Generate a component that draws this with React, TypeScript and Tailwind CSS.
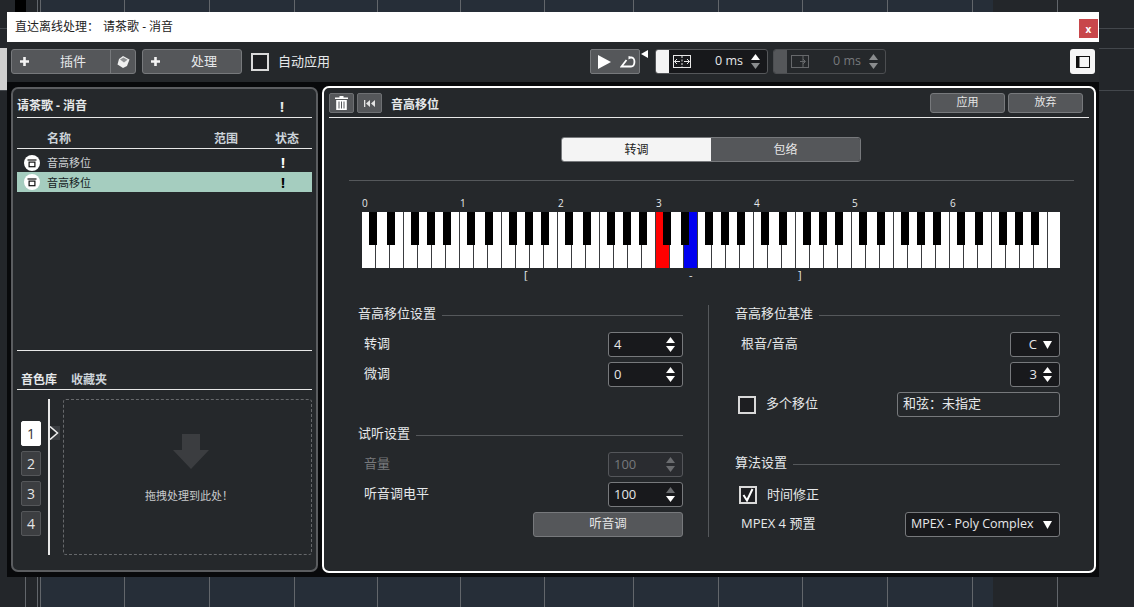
/**
 * 直达离线处理窗口：插件链、音色库与音高移位设置面板。
 */

const gridCells = [
  { w: 26, cls: 'border-r border-[#62666b]' },
  { w: 12, cls: 'border-r border-[#62666b]' },
  { w: 3, cls: 'border-r border-[#62666b]' },
  { w: 84, cls: 'border-r border-[#62666b] bg-[#262e38]' },
  { w: 85, cls: 'border-r border-[#62666b] bg-[#262e38]' },
  { w: 85, cls: 'border-r border-[#62666b] bg-[#262e38]' },
  { w: 83, cls: 'border-r border-[#62666b] bg-[#262e38]' },
  { w: 83, cls: 'border-r border-[#62666b] bg-[#262e38]' },
  { w: 84, cls: 'border-r border-[#62666b] bg-[#262e38]' },
  { w: 89, cls: 'border-r border-[#62666b] bg-[#262e38]' },
  { w: 85, cls: 'border-r border-[#62666b] bg-[#262e38]' },
  { w: 84, cls: 'border-r border-[#62666b] bg-[#262e38]' },
  { w: 85, cls: 'border-r border-[#62666b] bg-[#262e38]' },
  { w: 85, cls: 'border-r border-[#62666b] bg-[#262e38]' },
  { w: 20, cls: 'bg-[#262e38]' },
  { w: 65, cls: 'border-r border-[#62666b]' },
]

const blackOffsets = [7, 25, 49, 65, 81]

function Piano() {
  const whites = Array.from({ length: 49 }, (_, i) => i + 1)
  const blacks: number[] = []
  for (let o = 0; o < 7; o++) blackOffsets.forEach((b) => blacks.push(o * 98 + b))
  return (
    <svg width="698" height="56" viewBox="0 0 698 56" className="block" shapeRendering="crispEdges">
      <rect width="698" height="56" fill="#fff" />
      <rect x="294" width="14" height="56" fill="#ff0000" />
      <rect x="322" width="14" height="56" fill="#0000f0" />
      {whites.map((i) => (
        <rect key={i} x={i * 14 - 1} width="1" height="56" fill="#3a3c40" />
      ))}
      {blacks.map((x) => (
        <rect key={x} x={x} width="8" height="33" fill="#000" />
      ))}
    </svg>
  )
}

function Arrows({ up = '#fff', down = '#fff' }: { up?: string; down?: string }) {
  return (
    <svg width="9" height="15" viewBox="0 0 9 15" className="shrink-0">
      <path d="M4.5 0 L9 6 L0 6 Z" fill={up} />
      <path d="M4.5 15 L9 9 L0 9 Z" fill={down} />
    </svg>
  )
}

function Caret() {
  return (
    <svg width="9" height="8" viewBox="0 0 9 8" className="shrink-0">
      <path d="M0 0 H9 L4.5 8 Z" fill="#fff" />
    </svg>
  )
}

function Spin({
  value,
  disabled,
  dimUp,
}: {
  value: string
  disabled?: boolean
  dimUp?: boolean
}) {
  return (
    <div
      className={`flex h-[25px] w-[75px] items-center justify-between rounded-[3px] border pl-[5px] pr-[7px] text-[13px] ${
        disabled
          ? 'border-[#54565a] bg-[#2a2c30] text-[#77797c]'
          : 'border-[#77797c] bg-[#18191c] text-[#e6e6e6]'
      }`}
    >
      <span>{value}</span>
      {disabled ? (
        <Arrows up="#6a6c6f" down="#6a6c6f" />
      ) : (
        <Arrows up={dimUp ? '#6a6c6f' : '#fff'} />
      )}
    </div>
  )
}

function Heading({ children }: { children: string }) {
  return (
    <div className="flex h-[20px] items-center gap-[6px] text-[13px] text-[#e6e8ea]">
      <span className="-ml-px shrink-0 pb-[2px]">{children}</span>
      <div className="h-px flex-1 bg-[#55585b]" />
    </div>
  )
}

function Checkbox({ checked }: { checked?: boolean }) {
  return (
    <div className="flex h-[18px] w-[18px] shrink-0 items-center justify-center border-2 border-[#d9d9d9] bg-[#1d1e21]">
      {checked && (
        <svg width="14" height="14" viewBox="0 0 14 14">
          <path d="M2.5 7 L6 12.5 L11.5 1" fill="none" stroke="#fff" strokeWidth="2" />
        </svg>
      )}
    </div>
  )
}

function PlusIcon() {
  return (
    <svg width="9" height="9" viewBox="0 0 9 9">
      <path d="M3.2 0 H5.8 V3.2 H9 V5.8 H5.8 V9 H3.2 V5.8 H0 V3.2 H3.2 Z" fill="#f4f4f4" />
    </svg>
  )
}

function RowIcon() {
  return (
    <svg width="16" height="16" viewBox="0 0 16 16" className="shrink-0">
      <circle cx="8" cy="8" r="8" fill="#fff" />
      <path d="M3.5 5 H12.5" stroke="#111" strokeWidth="1.2" />
      <rect x="5.1" y="7.1" width="5.8" height="4.6" fill="none" stroke="#111" strokeWidth="1.2" />
    </svg>
  )
}

function Slot({ n, active }: { n: string; active?: boolean }) {
  return (
    <div
      className={`flex h-[25px] w-[20px] items-center justify-center rounded-[2px] border text-[14px] ${
        active
          ? 'border-white bg-white text-[#333]'
          : 'border-[#55575a] bg-[#3c3e41] text-[#e6e6e6]'
      }`}
    >
      {n}
    </div>
  )
}

function PluginColumn() {
  return (
    <div className="flex h-[485px] w-[307px] shrink-0 flex-col rounded-[7px] border-2 border-[#5b5d60] bg-[#25282b] px-[4px] pb-[15px] text-[#e6e8ea]">
      <div className="flex h-[29px] shrink-0 items-center justify-between border-b border-[#e8e8e8] pt-[6px]">
        <span className="text-[12px] font-bold">请茶歌 - 消音</span>
        <span className="mr-[28px] text-[14px] font-bold">!</span>
      </div>
      <div className="flex h-[31px] shrink-0 items-end border-b border-[#e8e8e8] text-[12px] font-bold text-[#ccd3d9]">
        <span className="ml-[30px] w-[167px]">名称</span>
        <span className="w-[61px]">范围</span>
        <span>状态</span>
      </div>
      <div className="flex h-[23px] shrink-0 items-center text-[11px] text-[#cfd3d6]">
        <div className="ml-[7px] mr-[7px] pt-[5px]"><RowIcon /></div>
        <span className="w-[234px] pt-[5px]">音高移位</span>
        <span className="pt-[4px] text-[14px] font-bold text-white">!</span>
      </div>
      <div className="flex h-[20px] shrink-0 items-center bg-[#a5cdbf] text-[11px] text-[#14201c]">
        <div className="ml-[7px] mr-[7px]"><RowIcon /></div>
        <span className="w-[234px] pt-[2px]">音高移位</span>
        <span className="text-[14px] font-bold text-black">!</span>
      </div>
      <div className="flex-1 border-b border-[#e8e8e8]" />
      <div className="flex h-[39px] shrink-0 items-end gap-[14px] border-b border-[#e8e8e8] pl-[4px] text-[12px] font-bold">
        <span>音色库</span>
        <span className="text-[#ccd3d9]">收藏夹</span>
      </div>
      <div className="mt-[9px] flex h-[156px] shrink-0">
        <div className="flex w-[31px] flex-col gap-[5px] pl-[4px] pt-[22px]">
          <Slot n="1" active />
          <Slot n="2" />
          <Slot n="3" />
          <Slot n="4" />
        </div>
        <div className="w-[15px] border-l-2 border-[#e8e8e8] pt-[27px]">
          <svg width="10" height="14" viewBox="0 0 10 14" className="block">
            <rect width="10" height="14" fill="#3a3d41" />
            <path d="M0 0.5 L7.5 7 L0 13.5" fill="#25282b" stroke="#f0f0f0" strokeWidth="1.5" />
          </svg>
        </div>
        <div className="flex w-[249px] flex-col items-center rounded-[3px] border border-dashed border-[#66686b] pt-[34px]">
          <svg width="36" height="35" viewBox="0 0 36 35" className="ml-[6px] block">
            <path d="M9 0 H27 V16 H36 L18 35 L0 16 H9 Z" fill="#3b3d40" />
          </svg>
          <span className="ml-[3px] mt-[19px] text-[11px] text-[#c8cacc]">拖拽处理到此处！</span>
        </div>
      </div>
    </div>
  )
}

function SettingsPanel() {
  return (
    <div className="flex h-[487px] w-[774px] shrink-0 flex-col rounded-[7px] border-2 border-white bg-[#25282b] text-[#e6e8ea]">
      <div className="mx-[5px] flex h-[30px] shrink-0 items-center border-b border-[#e8e8e8]">
        <button className="mt-[1px] flex h-[20px] w-[25px] items-center justify-center rounded-[2px] border border-[#6e7073] bg-[#55575a]">
          <svg width="13" height="14" viewBox="0 0 13 14">
            <path d="M4.5 0 H8.5 V1.5 H13 V3 H0 V1.5 H4.5 Z M1.2 4 H11.8 V14 H1.2 Z" fill="#fff" />
            <path d="M4 5.5 V12.5 M6.5 5.5 V12.5 M9 5.5 V12.5" stroke="#55575a" strokeWidth="1" />
          </svg>
        </button>
        <button className="ml-[3px] mt-[1px] flex h-[20px] w-[25px] items-center justify-center rounded-[2px] border border-[#6e7073] bg-[#55575a]">
          <svg width="11" height="7" viewBox="0 0 11 7">
            <path d="M0 0 H1.3 V7 H0 Z M6 0 V7 L2 3.5 Z M11 0 V7 L7 3.5 Z" fill="#e4e4e4" />
          </svg>
        </button>
        <span className="ml-[9px] pt-[5px] text-[12px] font-bold">音高移位</span>
        <button className="ml-auto h-[20px] w-[75px] rounded-[3px] border border-[#77797c] bg-[#55575a] text-[11px] text-[#e6e6e6]">
          应用
        </button>
        <button className="ml-[3px] mr-[6px] h-[20px] w-[75px] rounded-[3px] border border-[#77797c] bg-[#55575a] text-[11px] text-[#e6e6e6]">
          放弃
        </button>
      </div>

      <div className="ml-[237px] mt-[19px] flex h-[25px] w-[300px] shrink-0 overflow-hidden rounded-[3px] border border-[#77797c] text-[12px]">
        <div className="flex w-[149px] items-center justify-center bg-[#f4f4f4] text-[#222]">转调</div>
        <div className="flex flex-1 items-center justify-center bg-[#55575a] text-[#e6e6e6]">包络</div>
      </div>

      <div className="ml-[25px] mt-[18px] h-px w-[725px] shrink-0 bg-[#55585b]" />

      <div className="ml-[38px] mt-[14px] flex h-[17px] shrink-0 items-center text-[10px] text-[#e6e8ea]">
        {['0', '1', '2', '3', '4', '5', '6'].map((n) => (
          <span key={n} className="w-[98px]">{n}</span>
        ))}
      </div>
      <div className="ml-[38px] shrink-0">
        <Piano />
      </div>
      <div className="ml-[38px] flex h-[14px] shrink-0 items-center pl-[162px] text-[11px] text-[#e6e8ea]">
        <span className="w-[165px]">[</span>
        <span className="w-[109px]">-</span>
        <span>]</span>
      </div>

      <div className="ml-[35px] mt-[23px] flex">
        <div className="flex w-[324px] flex-col">
          <Heading>音高移位设置</Heading>
          <div className="mt-[7px] flex flex-col gap-[5px] text-[13px]">
            <div className="flex items-center justify-between pl-[5px]">
              <span className="pb-[2px]">转调</span>
              <Spin value="4" />
            </div>
            <div className="flex items-center justify-between pl-[5px]">
              <span className="pb-[2px]">微调</span>
              <Spin value="0" />
            </div>
          </div>
          <div className="mt-[38px]">
            <Heading>试听设置</Heading>
          </div>
          <div className="mt-[7px] flex flex-col gap-[5px] text-[13px]">
            <div className="flex items-center justify-between pl-[5px] text-[#77797c]">
              <span className="pb-[2px]">音量</span>
              <Spin value="100" disabled />
            </div>
            <div className="flex items-center justify-between pl-[5px]">
              <span className="pb-[2px]">听音调电平</span>
              <Spin value="100" dimUp />
            </div>
            <button className="ml-auto h-[25px] w-[150px] rounded-[3px] border border-[#77797c] bg-[#55575a] text-[12.5px] text-[#e6e6e6]">
              听音调
            </button>
          </div>
        </div>

        <div className="ml-[25px] mr-[27px] w-px bg-[#55585b]" />

        <div className="flex w-[324px] flex-col">
          <Heading>音高移位基准</Heading>
          <div className="mt-[7px] flex flex-col gap-[5px] text-[13px]">
            <div className="flex items-center justify-between pl-[5px]">
              <span className="pb-[2px]">根音/音高</span>
              <div className="flex h-[25px] w-[50px] items-center justify-end gap-[6px] rounded-[3px] border border-[#77797c] bg-[#18191c] pr-[7px]">
                <span>C</span>
                <Caret />
              </div>
            </div>
            <div className="flex justify-end">
              <div className="flex h-[25px] w-[50px] items-center justify-end gap-[6px] rounded-[3px] border border-[#77797c] bg-[#18191c] pr-[7px]">
                <span>3</span>
                <Arrows />
              </div>
            </div>
            <div className="flex items-center pl-[2px]">
              <Checkbox />
              <span className="ml-[10px] pb-[2px]">多个移位</span>
              <div className="ml-auto flex h-[25px] w-[163px] items-center rounded-[3px] border border-[#77797c] pb-[2px] pl-[5px]">
                和弦：未指定
              </div>
            </div>
          </div>
          <div className="mt-[37px]">
            <Heading>算法设置</Heading>
          </div>
          <div className="mt-[8px] flex flex-col gap-[5px] text-[13px]">
            <div className="flex h-[25px] items-center pl-[3px]">
              <Checkbox checked />
              <span className="ml-[10px]">时间修正</span>
            </div>
            <div className="flex items-center justify-between pl-[5px]">
              <span className="pb-[2px]">MPEX 4 预置</span>
              <div className="flex h-[25px] w-[155px] items-center justify-between rounded-[3px] border border-[#77797c] bg-[#18191c] pl-[5px] pr-[7px]">
                <span className="text-[12.5px]">MPEX - Poly Complex</span>
                <Caret />
              </div>
            </div>
          </div>
        </div>
      </div>
    </div>
  )
}

function Toolbar() {
  return (
    <div className="flex h-[40px] shrink-0 items-center bg-[#25282b] pb-[1px] pl-[4px] text-[13px] text-[#e6e8ea]">
      <div className="flex h-[25px] w-[125px] rounded-[3px] border border-[#77797c] bg-[#55575a]">
        <div className="flex w-[98px] items-center pl-[8px]">
          <PlusIcon />
          <span className="ml-[31px]">插件</span>
        </div>
        <div className="flex flex-1 items-center justify-center border-l border-[#77797c]">
          <svg width="13" height="12" viewBox="0 0 13 12">
            <path d="M6 0 L12.5 3.5 L10 10 L6 12 L0.5 8.5 L2 3 Z" fill="#f0f0f0" />
            <path d="M3 3.5 L6.5 1.5 L10.5 3.8 L7 6.5 Z" fill="#8f9193" />
          </svg>
        </div>
      </div>
      <div className="ml-[6px] flex h-[25px] w-[100px] items-center rounded-[3px] border border-[#77797c] bg-[#55575a] pl-[8px]">
        <PlusIcon />
        <span className="ml-[31px]">处理</span>
      </div>
      <div className="ml-[9px]">
        <Checkbox />
      </div>
      <span className="ml-[9px] w-[52px] whitespace-nowrap">自动应用</span>
      <div className="ml-[260px] flex h-[25px] w-[50px] items-center gap-[9px] rounded-[2px] border border-[#77797c] bg-[#55575a] pl-[7px]">
        <svg width="13" height="14" viewBox="0 0 13 14">
          <path d="M0 0 L13 7 L0 14 Z" fill="#fff" />
        </svg>
        <svg width="16" height="12" viewBox="0 0 16 12">
          <path d="M9 1.5 H11.5 C15.5 1.5 15.5 10.5 11 10.5 H1.5 L6.5 4" fill="none" stroke="#fff" strokeWidth="1.8" />
          <path d="M8.5 0 L11.5 1.5 L8.5 3.5 Z" fill="#fff" />
        </svg>
      </div>
      <div className="ml-[1px] w-[7px] self-start pt-[8px]">
        <svg width="7" height="8" viewBox="0 0 7 8" className="block">
          <path d="M7 0 V8 L0 4 Z" fill="#fff" />
        </svg>
      </div>
      <div className="ml-[7px] flex h-[25px] w-[113px] items-center overflow-hidden rounded-[3px] border border-[#55575a] bg-[#17181b]">
        <div className="h-full w-[13px] bg-[#f4f4f4]" />
        <svg width="18" height="13" viewBox="0 0 18 13" className="ml-[4px]">
          <rect x="0.5" y="0.5" width="17" height="12" fill="none" stroke="#e8e8e8" strokeWidth="1" />
          <path d="M9 1 V12" stroke="#e8e8e8" strokeDasharray="2 1.5" />
          <path d="M1.5 6.5 H7 M1.5 6.5 L4 4 M1.5 6.5 L4 9 M16.5 6.5 H11 M16.5 6.5 L14 4 M16.5 6.5 L14 9" fill="none" stroke="#e8e8e8" strokeWidth="1" />
        </svg>
        <span className="ml-auto mr-[8px] text-[12.5px]">0 ms</span>
        <div className="mr-[7px] flex"><Arrows down="#8a8c8e" /></div>
      </div>
      <div className="ml-[5px] flex h-[25px] w-[113px] items-center overflow-hidden rounded-[3px] border border-[#4c4e51] bg-[#25282b] text-[#77797c]">
        <div className="h-full w-[13px] bg-[#55575a]" />
        <svg width="18" height="13" viewBox="0 0 18 13" className="ml-[4px]">
          <rect x="0.5" y="0.5" width="17" height="12" fill="none" stroke="#66686b" strokeWidth="1" />
          <path d="M12 1 V12 M9 6.5 H14 M12 4 L14.5 6.5 L12 9" fill="none" stroke="#66686b" strokeWidth="1" />
        </svg>
        <span className="ml-auto mr-[8px] text-[12.5px]">0 ms</span>
        <div className="mr-[7px] flex"><Arrows up="#8a8c8e" down="#8a8c8e" /></div>
      </div>
      <button className="ml-auto mr-[4px] flex h-[25px] w-[25px] items-center justify-center rounded-[3px] bg-[#f6f6f6]">
        <svg width="14" height="12" viewBox="0 0 14 12">
          <rect x="0.5" y="0.5" width="13" height="11" fill="none" stroke="#111" />
          <rect x="1" y="1" width="2.5" height="10" fill="#111" />
        </svg>
      </button>
    </div>
  )
}

export default function App() {
  return (
    <div className="relative h-[607px] w-[1134px] overflow-hidden bg-[#23262a] font-['Open_Sans','Noto_Sans_CJK_SC',sans-serif]">
      <div className="absolute inset-0 flex">
        {gridCells.map((c, i) => (
          <div key={i} className={`h-full shrink-0 ${c.cls}`} style={{ width: c.w }} />
        ))}
      </div>
      <div className="absolute left-[15px] top-0 h-[12px] w-[11px] bg-black" />
      <div className="absolute inset-x-0 top-[28px] h-px bg-[#43474c]" />
      <div className="absolute inset-x-0 top-[48px] h-px bg-[#43474c]" />
      <div className="absolute inset-x-0 top-[90px] h-px bg-[#43474c]" />
      <div className="absolute left-0 top-[48px] h-[42px] w-[7px] bg-[#cfcfcf]" />

      <div className="absolute left-[7px] top-[12px] flex h-[565px] w-[1092px] flex-col">
        <div className="flex h-[30px] shrink-0 items-center justify-between bg-white pl-[8px] pr-[1px] text-[12px] text-[#222]">
          <span>
            直达离线处理：<span className="ml-[4px]">请茶歌 - 消音</span>
          </span>
          <div className="mt-[3px] flex h-[19px] w-[19px] items-center justify-center bg-[#c8474b] text-[10px] font-bold leading-none text-white">
            x
          </div>
        </div>
        <Toolbar />
        <div className="flex flex-1 gap-[4px] bg-[#08090b] pl-[4px] pt-[4px]">
          <div className="pt-[1px]">
            <PluginColumn />
          </div>
          <SettingsPanel />
        </div>
      </div>
    </div>
  )
}
